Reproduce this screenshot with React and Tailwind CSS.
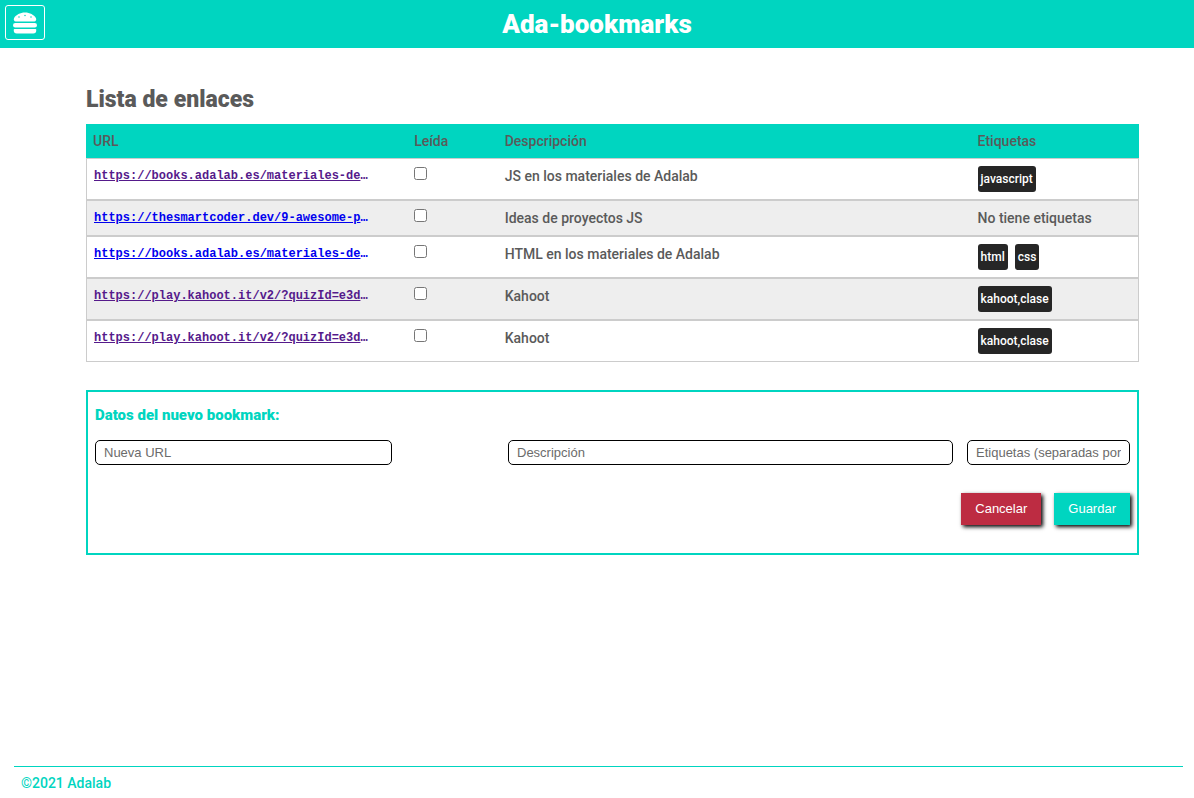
import { FaHamburger } from "react-icons/fa";

const bookmarks = [
  { id: 1, url: "https://books.adalab.es/materiales-de", visited: true, description: "JS en los materiales de Adalab", tags: ["javascript"] },
  { id: 2, url: "https://thesmartcoder.dev/9-awesome-p", visited: false, description: "Ideas de proyectos JS", tags: [] },
  { id: 3, url: "https://books.adalab.es/materiales-de", visited: false, description: "HTML en los materiales de Adalab", tags: ["html", "css"] },
  { id: 4, url: "https://play.kahoot.it/v2/?quizId=e3d", visited: true, description: "Kahoot", tags: ["kahoot,clase"] },
  { id: 5, url: "https://play.kahoot.it/v2/?quizId=e3d", visited: true, description: "Kahoot", tags: ["kahoot,clase"] },
];

function Header() {
  return (
    <header className="grid h-12 grid-cols-[40px_1fr_40px] items-center bg-[#00d5c0] px-[5px] text-white">
      <button type="button" aria-label="Menú" className="mb-[3px] flex h-[35px] items-center justify-center rounded-[3px] border border-white">
        <FaHamburger size={24} />
      </button>
      <h1 className="text-center text-[26px] leading-8 font-black">Ada-bookmarks</h1>
    </header>
  );
}

function Row({ bookmark }) {
  const cell = "border-y border-[#ccc] p-[7px] align-top";
  return (
    <tr className="even:bg-[#eee]">
      <td className={`${cell} border-l`}>
        <a
          href={bookmark.url}
          className={`block overflow-hidden whitespace-nowrap font-['Liberation_Mono',monospace] text-xs leading-5 font-bold ${bookmark.visited ? "text-[#551a8b]" : "text-[#0000ee]"}`}
        >
          <span className="underline">{bookmark.url}</span>…
        </a>
      </td>
      <td className={cell}>
        <input type="checkbox" aria-label={`Leída: ${bookmark.description}`} className="mt-px block size-[13px]" />
      </td>
      <td className={cell}>{bookmark.description}</td>
      <td className={`${cell} border-r`}>
        {bookmark.tags.length === 0 ? (
          "No tiene etiquetas"
        ) : (
          <ul className="flex gap-[7px]">
            {bookmark.tags.map((tag) => (
              <li key={tag} className="rounded-[3px] bg-[#262626] px-[3px] py-[3px] text-xs leading-5 font-medium text-white">
                {tag}
              </li>
            ))}
          </ul>
        )}
      </td>
    </tr>
  );
}

function BookmarkTable() {
  return (
    <table className="w-full table-fixed border-separate border-spacing-0 text-left">
      <colgroup>
        <col className="w-[30.5%]" />
        <col className="w-[8.6%]" />
        <col />
        <col className="w-[16%]" />
      </colgroup>
      <thead>
        <tr className="bg-[#00d5c0]">
          <th className="p-[7px] font-medium">URL</th>
          <th className="p-[7px] font-medium">Leída</th>
          <th className="p-[7px] font-medium">Despcripción</th>
          <th className="p-[7px] font-medium">Etiquetas</th>
        </tr>
      </thead>
      <tbody>
        {bookmarks.map((bookmark) => (
          <Row key={bookmark.id} bookmark={bookmark} />
        ))}
      </tbody>
    </table>
  );
}

function NewBookmark() {
  const field =
    "h-[25px] w-full min-w-0 rounded-[5px] border border-black bg-white px-2 font-['Liberation_Sans',sans-serif] text-[13px] font-normal placeholder:text-[#6b6b6b]";
  const button =
    "h-8 px-[14px] font-['Liberation_Sans',sans-serif] text-[13px] font-normal text-white shadow-[2px_2px_4px_#000]";
  return (
    <form className="mt-7 border-2 border-[#00d5c0] px-[7px] pt-[13px] pb-7">
      <h3 className="text-[15px] leading-5 font-black text-[#00d5c0]">Datos del nuevo bookmark:</h3>
      <div className="mt-[15px] grid grid-cols-[297fr_88fr_445fr_163fr] gap-x-[14px]">
        <input type="text" aria-label="Nueva URL" placeholder="Nueva URL" className={field} />
        <input type="text" aria-label="Descripción" placeholder="Descripción" className={`${field} col-start-3`} />
        <input type="text" aria-label="Etiquetas" placeholder="Etiquetas (separadas por comas)" className={field} />
      </div>
      <div className="mt-7 flex justify-end gap-[13px]">
        <button type="button" className={`${button} bg-[#bd2c42]`}>Cancelar</button>
        <button type="submit" className={`${button} bg-[#00d5c0]`}>Guardar</button>
      </div>
    </form>
  );
}

export default function App() {
  return (
    <div className="flex min-h-screen flex-col bg-white font-[Roboto,sans-serif] text-sm leading-5 font-medium text-[#5a5a5a]">
      <Header />
      <main className="grow pt-9 pr-[55px] pb-7 pl-[86px]">
        <h2 className="mb-2 text-[23px] leading-8 font-black">Lista de enlaces</h2>
        <BookmarkTable />
        <NewBookmark />
      </main>
      <footer className="mr-[11px] ml-[14px] border-t border-[#00d5c0] px-[7px] pt-[6px] pb-[5px] text-[#00d5c0]">
        ©2021 Adalab
      </footer>
    </div>
  );
}
